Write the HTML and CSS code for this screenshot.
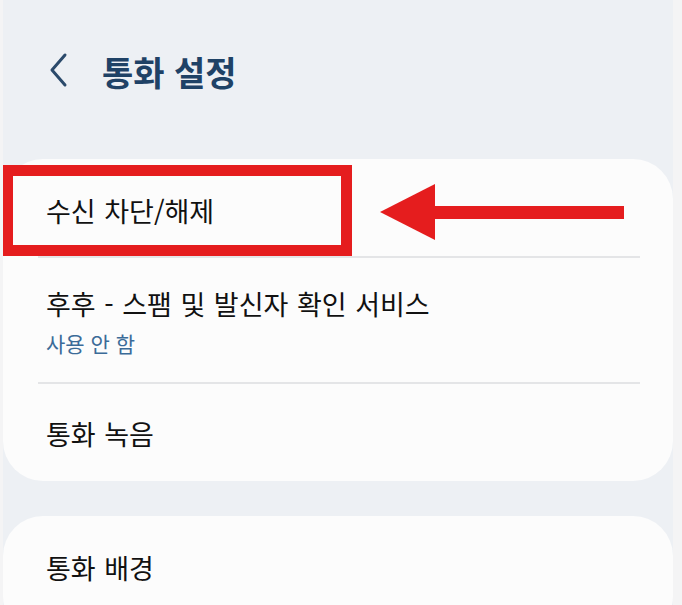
FILE: index.html
```html
<!DOCTYPE html>
<html lang="ko">

<head>
  <meta charset="UTF-8">
  <meta name="viewport" content="width=device-width, initial-scale=1.0">
  <title>통화 설정</title>
  <link rel="stylesheet" href="styles.css">
</head>

<body>

  <div class="screen">
    <div class="header">
      <svg class="back" width="24" height="36" viewBox="0 0 24 36">
        <path d="M18 3 L5 18 L18 33" fill="none" stroke="#2b4a6b" stroke-width="3" stroke-linecap="round" stroke-linejoin="round" />
      </svg>
      <h1>통화 설정</h1>
    </div>

    <div class="card card-main">
      <div class="item item-first">
        <div class="item-title">수신 차단/해제</div>
      </div>
      <div class="divider"></div>
      <div class="item item-sub">
        <div class="item-title">후후 - 스팸 및 발신자 확인 서비스</div>
        <div class="item-summary">사용 안 함</div>
      </div>
      <div class="divider"></div>
      <div class="item item-last">
        <div class="item-title">통화 녹음</div>
      </div>

      <!-- выделение поверх списка -->
      <div class="mark-box"></div>
      <svg class="mark-arrow" width="250" height="60" viewBox="0 0 250 60">
        <polygon points="2,29 57,1 57,57" fill="#e51d1e" />
        <rect x="56" y="23" width="190" height="13" fill="#e51d1e" />
      </svg>
    </div>

    <div class="card card-second">
      <div class="item item-first">
        <div class="item-title">통화 배경</div>
      </div>
    </div>
  </div>

</body>

</html>
```

FILE: styles.css
```css
body {
  margin: 0;
  padding: 0;
  background-color: #f4f4f5;
  font-family: "Noto Sans CJK KR", "Noto Sans", sans-serif;
}

.screen {
  width: 670px;
  height: 605px;
  margin-left: 3px;
  background-color: #edf0f4;
  overflow: hidden;
}

.header {
  height: 142px;
  display: flex;
  align-items: center;
  padding-left: 44px;
  gap: 31px;
}

.header .back {
  margin-top: -2px;
}

.header h1 {
  margin: 0;
  font-size: 34px;
  font-weight: 700;
  color: #1f4266;
}

.card {
  position: relative;
  background-color: #fcfcfc;
  border-radius: 40px;
}

.card-main {
  margin-top: 17px;
}

.card-second {
  margin-top: 35px;
  height: 120px;
}

.item {
  padding: 0 43px;
}

.item-first {
  padding-top: 34px;
  padding-bottom: 27px;
}

.item-sub {
  padding-top: 28px;
  padding-bottom: 25px;
}

.item-last {
  padding-top: 32px;
  padding-bottom: 29px;
}

.item-title {
  font-size: 27px;
  line-height: 36px;
  color: #111;
  word-spacing: 1px;
}

.item-summary {
  margin-top: 7px;
  font-size: 21px;
  line-height: 28px;
  color: #3b6b98;
}

.divider {
  height: 2px;
  margin: 0 33px 0 35px;
  background-color: #e4e5e7;
}

.mark-box {
  position: absolute;
  left: -1px;
  top: 6px;
  width: 328px;
  height: 69px;
  border: 11px solid #e51d1e;
}

.mark-arrow {
  position: absolute;
  left: 375px;
  top: 24px;
}
```
